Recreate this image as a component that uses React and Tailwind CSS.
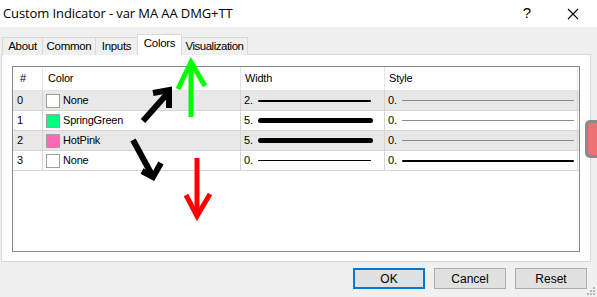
import React from "react";

const rows = [
  { n: "0", sw: null, name: "None", w: "2.", wt: 2, s: "0.", st: "gray", bg: "bg-[#e8e8e8]" },
  { n: "1", sw: "#00ff7f", name: "SpringGreen", w: "5.", wt: 5, s: "0.", st: "gray", bg: "bg-white" },
  { n: "2", sw: "#ff69b4", name: "HotPink", w: "5.", wt: 5, s: "0.", st: "gray", bg: "bg-[#e8e8e8]" },
  { n: "3", sw: null, name: "None", w: "0.", wt: 1, s: "0.", st: "black", bg: "bg-white" },
];

function Line({ w, thick, color }) {
  return (
    <div
      className="rounded-full"
      style={{ width: w, height: thick, background: color }}
    />
  );
}

export default function App() {
  return (
    <div
      className="relative w-[597px] h-[297px] overflow-hidden bg-[#f0f0f0] text-black"
      style={{ fontFamily: '"Liberation Sans", Arial, sans-serif' }}
    >
      {/* Title bar */}
      <div className="h-[27px] bg-white flex items-center justify-between pl-[3px] pr-[18px]">
        <span className="text-[13px] tracking-[-0.1px]" style={{ fontFamily: '"Open Sans", "Liberation Sans", sans-serif' }}>
          Custom Indicator - var MA AA DMG+TT
        </span>
        <div className="flex items-center gap-[36px] text-[15px]">
          <span>?</span>
          <svg width="12" height="12" viewBox="0 0 12 12">
            <path d="M1 1 L11 11 M11 1 L1 11" stroke="#000" strokeWidth="1.1" />
          </svg>
        </div>
      </div>

      {/* Tabs */}
      <div className="flex items-end h-[27px] pl-[2px] text-[11.5px] tracking-[-0.3px]">
        <div className="h-[18px] w-[41px] border border-b-0 border-[#d9d9d9] bg-[#f0f0f0] flex items-center justify-center mb-[-1px]">About</div>
        <div className="h-[18px] w-[53px] border border-l-0 border-b-0 border-[#d9d9d9] bg-[#f0f0f0] flex items-center justify-center mb-[-1px]">Common</div>
        <div className="h-[18px] w-[42px] border border-l-0 border-b-0 border-[#d9d9d9] bg-[#f0f0f0] flex items-center justify-center mb-[-1px]">Inputs</div>
        <div className="relative z-10 h-[21px] w-[45px] border border-b-0 border-[#d9d9d9] bg-white flex items-center justify-center mb-[-1px] ml-[-1px] pb-[2px]">Colors</div>
        <div className="h-[18px] w-[66px] border border-l-0 border-b-0 border-[#d9d9d9] bg-[#f0f0f0] flex items-center justify-center mb-[-1px] tracking-[-0.5px]">Visualization</div>
      </div>

      {/* Panel */}
      <div className="ml-[1px] w-[590px] h-[208px] bg-white border border-[#d9d9d9] pt-[11px] pl-[10px]">
        <div className="w-[568px] h-[186px] border border-[#828790] bg-white text-[11px] tracking-[-0.2px]">
          {/* header */}
          <div className="flex h-[24px] border-b border-[#e5e5e5]">
            <div className="w-[30px] border-r border-[#e5e5e5] flex items-center pl-[7px]">#</div>
            <div className="w-[198px] border-r border-[#e5e5e5] flex items-center pl-[5px]">Color</div>
            <div className="w-[144px] border-r border-[#e5e5e5] flex items-center pl-[4px]">Width</div>
            <div className="w-[193px] border-r border-[#e5e5e5] flex items-center pl-[4px]">Style</div>
          </div>
          {rows.map((r) => (
            <div key={r.n} className={`flex h-[20px] border-b border-[#d5d5d5] ${r.bg}`}>
              <div className="w-[30px] border-r border-[#d5d5d5] flex items-center pl-[4px]">{r.n}</div>
              <div className="w-[198px] border-r border-[#d5d5d5] flex items-center pl-[3px] gap-[3px]">
                <div
                  className="w-[14px] h-[14px] border border-[#a0a0a0]"
                  style={{ background: r.sw || "#ffffff" }}
                />
                <span>{r.name}</span>
              </div>
              <div className="w-[144px] border-r border-[#d5d5d5] flex items-center pl-[3px] gap-[3px]">
                <span className="w-[11px]">{r.w}</span>
                <Line w={r.wt === 5 ? 115 : 113} thick={r.wt === 5 ? 5 : r.wt === 2 ? 2 : 1.5} color="#000" />
              </div>
              <div className="w-[193px] border-r border-[#d5d5d5] flex items-center pl-[3px] gap-[3px]">
                <span className="w-[11px]">{r.s}</span>
                <Line w={172} thick={r.st === "black" ? 2 : 1} color={r.st === "black" ? "#000" : "#8a8a8a"} />
              </div>
            </div>
          ))}
        </div>
      </div>

      {/* Buttons */}
      <div className="flex justify-end gap-[9px] pr-[10px] mt-[6px] text-[12px]">
        <div className="w-[72px] h-[21px] bg-[#e1e1e1] border-2 border-[#0078d7] flex items-center justify-center">OK</div>
        <div className="w-[72px] h-[21px] bg-[#e1e1e1] border border-[#adadad] flex items-center justify-center">Cancel</div>
        <div className="w-[72px] h-[21px] bg-[#e1e1e1] border border-[#adadad] flex items-center justify-center">Reset</div>
      </div>

      {/* resize grip */}
      <svg className="absolute right-[2px] bottom-[2px]" width="8" height="8" viewBox="0 0 8 8">
        {[[6, 0], [6, 3], [3, 3], [6, 6], [3, 6], [0, 6]].map(([x, y], i) => (
          <rect key={i} x={x} y={y} width="2" height="2" fill="#b8b8b8" />
        ))}
      </svg>

      {/* side overlay (gray rounded with red) */}
      <div className="absolute left-[585px] top-[120px] w-[20px] h-[38px] rounded-[5px] bg-[#8a8a8a] p-[3px] pr-0">
        <div className="w-full h-full rounded-l-[4px] bg-[#ec7273]" />
      </div>

      {/* annotation arrows */}
      <svg className="absolute left-0 top-0 pointer-events-none" width="597" height="297">
        <g stroke="#00ff00" strokeWidth="5" fill="none" strokeLinecap="butt" strokeLinejoin="miter">
          <line x1="191" y1="117" x2="191" y2="62" />
          <polyline points="178,89 191,62 205,86" />
        </g>
        <g stroke="#000" strokeWidth="6" fill="none" strokeLinejoin="miter">
          <line x1="143" y1="121" x2="167" y2="94" />
          <polyline points="153,93 169,90 169,108" />
        </g>
        <g stroke="#000" strokeWidth="6" fill="none" strokeLinejoin="miter">
          <line x1="133" y1="140" x2="152" y2="175" />
          <polyline points="142,171 153,177 161,163" />
        </g>
        <g stroke="#ff0000" strokeWidth="5" fill="none" strokeLinejoin="miter">
          <line x1="197" y1="158" x2="197" y2="214" />
          <polyline points="186,195 197,216 210,194" />
        </g>
      </svg>
    </div>
  );
}
